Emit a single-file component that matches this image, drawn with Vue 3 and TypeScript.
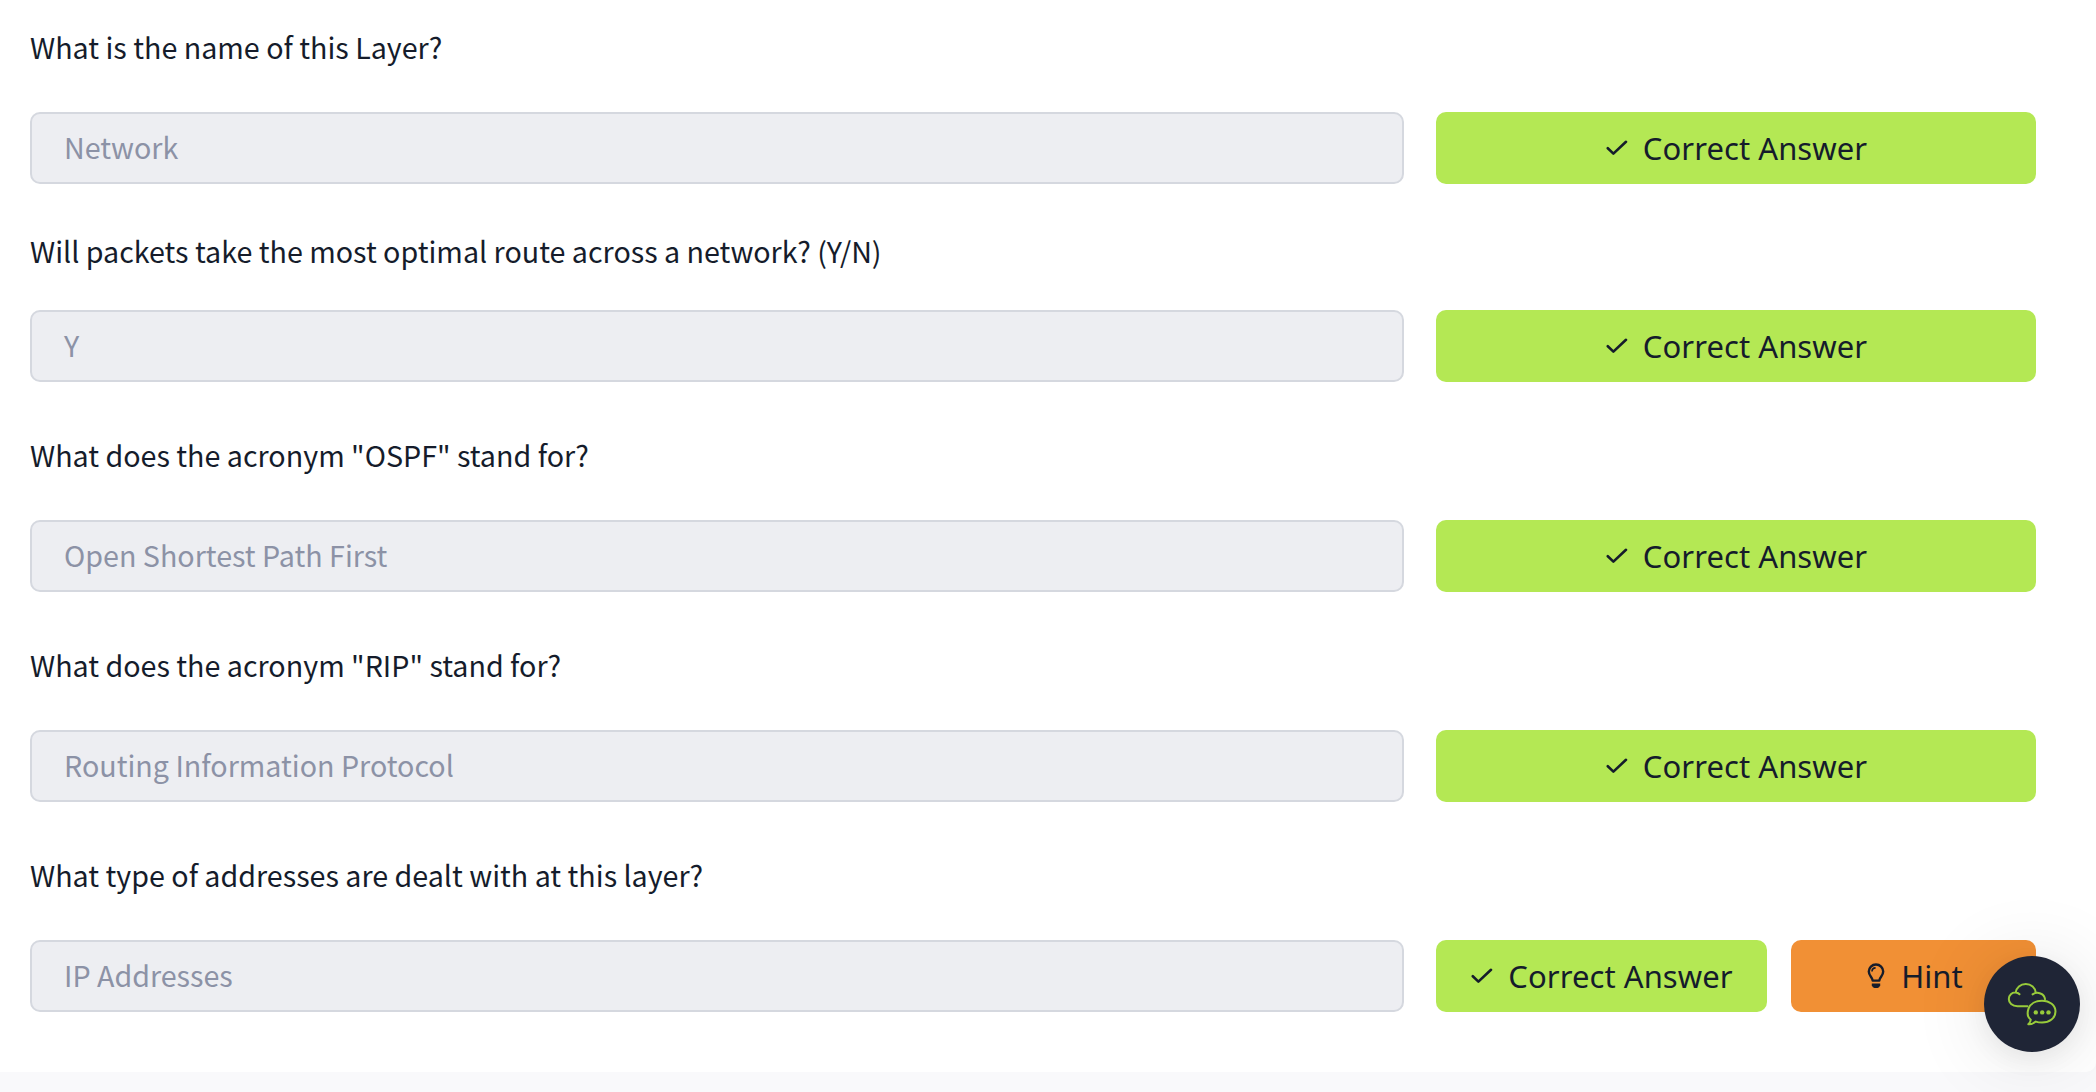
<script setup lang="ts">
interface Question {
  text: string
  answer: string
  compact?: boolean
  hint?: boolean
}

const questions: Question[] = [
  { text: 'What is the name of this Layer?', answer: 'Network' },
  { text: 'Will packets take the most optimal route across a network? (Y/N)', answer: 'Y', compact: true },
  { text: 'What does the acronym "OSPF" stand for?', answer: 'Open Shortest Path First' },
  { text: 'What does the acronym "RIP" stand for?', answer: 'Routing Information Protocol' },
  { text: 'What type of addresses are dealt with at this layer?', answer: 'IP Addresses', hint: true },
]
</script>

<template>
  <div class="page">
    <main class="card">
      <section v-for="q in questions" :key="q.text" class="question" :class="{ compact: q.compact }">
        <p class="prompt">{{ q.text }}</p>
        <div class="row">
          <div class="field">{{ q.answer }}</div>
          <div class="actions">
            <button class="btn correct" type="button">
              <svg class="check" width="22" height="16" viewBox="0 0 22 16">
                <path d="M1.8 8.2 L7.4 13.6 L20 1.8" />
              </svg>
              <span>Correct Answer</span>
            </button>
            <button v-if="q.hint" class="btn hint" type="button">
              <svg class="bulb" width="18" height="26" viewBox="0 0 18 26">
                <path class="line" d="M5.7 17.6 C5.5 14.2 1.8 12.8 1.8 8.6 A7.2 7.1 0 0 1 16.2 8.6 C16.2 12.8 12.5 14.2 12.3 17.6 Z" />
                <path class="shine" d="M5 8.6 C5 6.4 6.4 5 8.6 4.9" />
                <path class="base" d="M4.8 20.4 H13.2 V22.6 Q12.2 25 10.6 25 H7.4 Q5.8 25 4.8 22.6 Z" />
              </svg>
              <span>Hint</span>
            </button>
          </div>
        </div>
      </section>
    </main>
    <button class="chat" type="button" aria-label="Chat">
      <svg width="50" height="44" viewBox="0 0 50 44">
        <path d="M20.5 24.3 H10.5 C5 24.3 1.8 20.8 1.8 17 C1.8 12.8 5 10.4 8.5 10.6 Q11 10.8 12.5 12.3 M8.7 10.6 C9.2 5.6 13.4 2 18.8 2 C24.2 2 28.3 5.7 28.8 10.8 M25.6 12.4 C30.5 9 37.5 11.8 38 17.2" />
        <path d="M23.8 37.7 C19.5 34.5 20.5 29.5 21.6 26.4 C23.3 21.8 28.6 18.7 35 18.7 C42.8 18.7 48.5 23.4 48.5 29.6 C48.5 36.2 42.5 40.6 35 40.6 C32.8 40.6 30.6 40.3 28.8 39.6 Q25.4 42.5 21.3 42.2 Q23.6 40.2 23.8 37.7 Z" />
        <circle cx="28.8" cy="30.4" r="2.2" />
        <circle cx="35.2" cy="30.4" r="2.2" />
        <circle cx="41.5" cy="30.4" r="2.2" />
      </svg>
    </button>
  </div>
</template>

<style>
body {
  margin: 0;
  background: #f9f9fb;
}
</style>

<style scoped>
.page {
  position: relative;
  height: 1092px;
  overflow: hidden;
  background: #f9f9fb;
}
.card {
  box-sizing: border-box;
  display: flex;
  flex-direction: column;
  gap: 51px;
  height: 1072px;
  padding: 25px 60px 0 30px;
  background: #fff;
  border-radius: 0 0 10px 0;
}
.prompt {
  height: 44px;
  margin: 0 0 43px;
  color: #151c2b;
  font: 28.66px/44px "Noto Sans CJK SC", sans-serif;
  white-space: nowrap;
}
.compact {
  margin-top: -6px;
}
.compact .prompt {
  margin-bottom: 37px;
}
.row {
  display: flex;
  gap: 32px;
  height: 72px;
}
.field {
  box-sizing: border-box;
  flex: 1;
  padding-left: 32px;
  border: 2px solid #d5d8df;
  border-radius: 10px;
  background: #edeef2;
  color: #8c92a6;
  font: 28.66px/65px "Noto Sans CJK SC", sans-serif;
}
.actions {
  display: flex;
  gap: 24px;
  width: 600px;
}
.btn {
  display: flex;
  flex: 1;
  align-items: center;
  justify-content: center;
  gap: 15px;
  padding: 0 0 0 1px;
  border: 0;
  border-radius: 10px;
  color: #151c2b;
  font: 31px/72px "Noto Sans", sans-serif;
  letter-spacing: 0.06px;
  white-space: nowrap;
}
.correct {
  background: #b4e854;
}
.hint {
  flex: 0 0 245px;
  gap: 16px;
  padding-left: 3px;
  background: #f19035;
}
.check {
  fill: none;
  stroke: #151c2b;
  stroke-width: 2.6;
  stroke-linecap: round;
  stroke-linejoin: round;
}
.bulb .line,
.bulb .shine {
  fill: none;
  stroke: #151c2b;
  stroke-width: 2.4;
  stroke-linejoin: round;
}
.bulb .shine {
  stroke-width: 1.6;
}
.bulb .base {
  fill: #151c2b;
}
.chat {
  position: absolute;
  top: 956px;
  left: 1984px;
  display: flex;
  align-items: center;
  justify-content: center;
  width: 96px;
  height: 96px;
  padding: 0;
  border: 0;
  border-radius: 50%;
  background: #1f2536;
  box-shadow: 0 4px 80px rgba(0, 0, 0, 0.12), 0 8px 24px rgba(0, 0, 0, 0.06);
}
.chat path {
  fill: none;
  stroke: #98cb3b;
  stroke-width: 2;
  stroke-linecap: round;
  stroke-linejoin: round;
}
.chat circle {
  fill: #98cb3b;
}
</style>
